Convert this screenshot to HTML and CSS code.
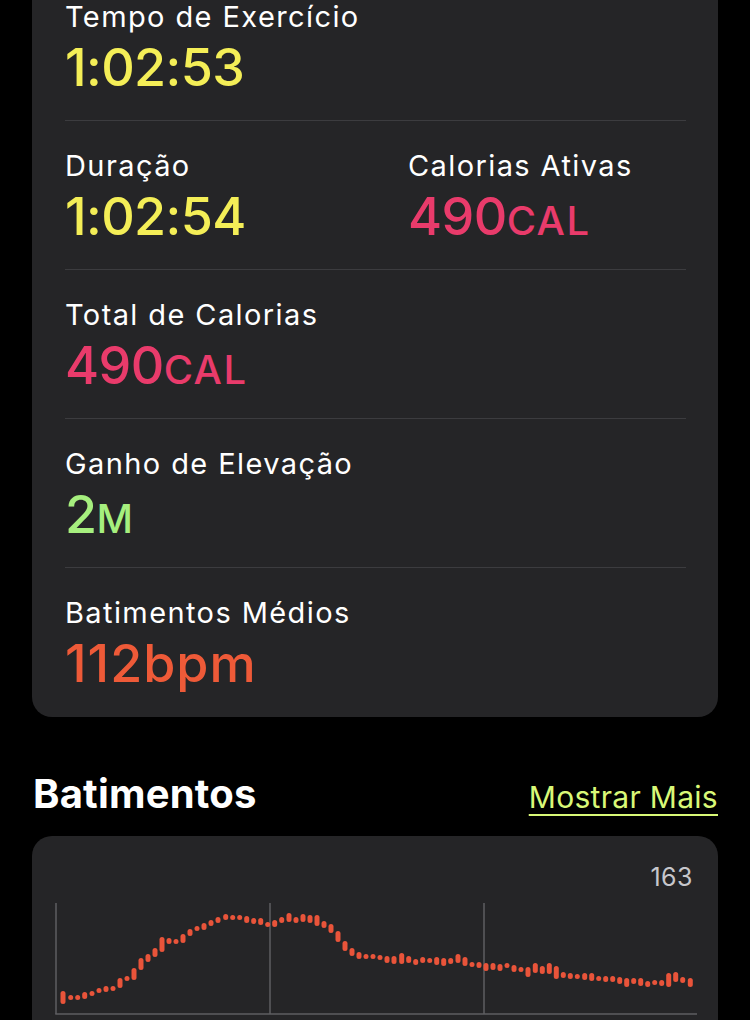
FILE: index.html
```html
<!DOCTYPE html>
<html lang="pt-BR">
<head>
<meta charset="utf-8">
<title>Treino</title>
<link rel="stylesheet" href="styles.css">
</head>
<body>
<main class="screen">
  <section class="stats-card">
    <div class="stat-row">
      <div class="stat">
        <div class="stat-label">Tempo de Exercício</div>
        <div class="stat-value yellow">1:02:53</div>
      </div>
    </div>
    <div class="stat-row two-col">
      <div class="stat">
        <div class="stat-label">Duração</div>
        <div class="stat-value yellow">1:02:54</div>
      </div>
      <div class="stat">
        <div class="stat-label">Calorias Ativas</div>
        <div class="stat-value pink">490<span class="unit">CAL</span></div>
      </div>
    </div>
    <div class="stat-row">
      <div class="stat">
        <div class="stat-label">Total de Calorias</div>
        <div class="stat-value pink">490<span class="unit">CAL</span></div>
      </div>
    </div>
    <div class="stat-row">
      <div class="stat">
        <div class="stat-label">Ganho de Elevação</div>
        <div class="stat-value green">2<span class="unit">M</span></div>
      </div>
    </div>
    <div class="stat-row">
      <div class="stat">
        <div class="stat-label">Batimentos Médios</div>
        <div class="stat-value orange">112bpm</div>
      </div>
    </div>
  </section>

  <header class="section-head">
    <h2 class="section-title">Batimentos</h2>
    <a class="section-link" href="#">Mostrar Mais</a>
  </header>

  <section class="chart-card">
    <div class="chart-max">163</div>
    <svg class="chart" width="686" height="130" viewBox="32 895 686 130" xmlns="http://www.w3.org/2000/svg">
      <g class="grid" stroke="#5e5e62" stroke-width="1.5" fill="none">
        <line x1="56" y1="903" x2="56" y2="1014"/>
        <line x1="270" y1="903" x2="270" y2="1014"/>
        <line x1="484" y1="903" x2="484" y2="1014"/>
        <line x1="55.25" y1="1014" x2="697" y2="1014"/>
      </g>
      <g class="bars" fill="#e9543a">
        <rect x="60.5" y="991" width="5" height="13" rx="2.5"/>
        <rect x="68.2" y="995" width="5" height="5" rx="2.5"/>
        <rect x="75.2" y="995" width="5" height="5" rx="2.5"/>
        <rect x="82.2" y="992" width="5" height="7" rx="2.5"/>
        <rect x="89.5" y="991" width="5" height="5" rx="2.5"/>
        <rect x="96.5" y="988" width="5" height="5" rx="2.5"/>
        <rect x="103.5" y="986" width="5" height="6" rx="2.5"/>
        <rect x="110.5" y="986" width="5" height="5" rx="2.5"/>
        <rect x="117.5" y="978" width="5" height="10" rx="2.5"/>
        <rect x="124.5" y="976" width="5" height="5" rx="2.5"/>
        <rect x="131.5" y="968" width="5" height="12" rx="2.5"/>
        <rect x="138.5" y="958" width="5" height="12" rx="2.5"/>
        <rect x="145.5" y="954" width="5" height="8" rx="2.5"/>
        <rect x="152.5" y="948" width="5" height="9" rx="2.5"/>
        <rect x="159.5" y="937" width="5" height="15" rx="2.5"/>
        <rect x="166.5" y="938" width="5" height="6" rx="2.5"/>
        <rect x="173.5" y="939" width="5" height="5" rx="2.5"/>
        <rect x="180.5" y="934" width="5" height="9" rx="2.5"/>
        <rect x="187.5" y="929" width="5" height="7" rx="2.5"/>
        <rect x="194.5" y="926" width="5" height="5" rx="2.5"/>
        <rect x="201.5" y="923" width="5" height="7" rx="2.5"/>
        <rect x="208.5" y="920" width="5" height="6" rx="2.5"/>
        <rect x="215.5" y="917" width="5" height="6" rx="2.5"/>
        <rect x="223.2" y="914" width="5" height="6" rx="2.5"/>
        <rect x="230.2" y="915" width="5" height="5" rx="2.5"/>
        <rect x="237.2" y="915" width="5" height="5" rx="2.5"/>
        <rect x="244.2" y="916" width="5" height="7" rx="2.5"/>
        <rect x="251.2" y="918" width="5" height="6" rx="2.5"/>
        <rect x="258.2" y="918" width="5" height="7" rx="2.5"/>
        <rect x="265.2" y="922" width="5" height="5" rx="2.5"/>
        <rect x="272.2" y="920" width="5" height="7" rx="2.5"/>
        <rect x="279.2" y="917" width="5" height="6" rx="2.5"/>
        <rect x="286.5" y="913" width="5" height="9" rx="2.5"/>
        <rect x="293.5" y="917" width="5" height="6" rx="2.5"/>
        <rect x="300.5" y="914" width="5" height="8" rx="2.5"/>
        <rect x="307.5" y="915" width="5" height="8" rx="2.5"/>
        <rect x="314.5" y="915" width="5" height="11" rx="2.5"/>
        <rect x="321.5" y="921" width="5" height="7" rx="2.5"/>
        <rect x="328.5" y="924" width="5" height="9" rx="2.5"/>
        <rect x="335.5" y="931" width="5" height="11" rx="2.5"/>
        <rect x="342.5" y="941" width="5" height="10" rx="2.5"/>
        <rect x="349.5" y="948" width="5" height="8" rx="2.5"/>
        <rect x="356.5" y="952" width="5" height="7" rx="2.5"/>
        <rect x="363.5" y="954" width="5" height="5" rx="2.5"/>
        <rect x="370.5" y="954" width="5" height="5" rx="2.5"/>
        <rect x="377.5" y="955" width="5" height="5" rx="2.5"/>
        <rect x="384.5" y="956" width="5" height="7" rx="2.5"/>
        <rect x="391.5" y="956" width="5" height="8" rx="2.5"/>
        <rect x="399.2" y="953" width="5" height="11" rx="2.5"/>
        <rect x="406.2" y="956" width="5" height="7" rx="2.5"/>
        <rect x="413.2" y="959" width="5" height="6" rx="2.5"/>
        <rect x="420.2" y="957" width="5" height="6" rx="2.5"/>
        <rect x="427.2" y="958" width="5" height="5" rx="2.5"/>
        <rect x="434.2" y="957" width="5" height="8" rx="2.5"/>
        <rect x="441.2" y="958" width="5" height="8" rx="2.5"/>
        <rect x="448.2" y="958" width="5" height="6" rx="2.5"/>
        <rect x="455.5" y="954" width="5" height="9" rx="2.5"/>
        <rect x="462.5" y="957" width="5" height="9" rx="2.5"/>
        <rect x="469.5" y="962" width="5" height="5" rx="2.5"/>
        <rect x="476.5" y="962" width="5" height="6" rx="2.5"/>
        <rect x="483.5" y="963" width="5" height="8" rx="2.5"/>
        <rect x="490.5" y="963" width="5" height="7" rx="2.5"/>
        <rect x="497.5" y="964" width="5" height="7" rx="2.5"/>
        <rect x="504.5" y="963" width="5" height="5" rx="2.5"/>
        <rect x="511.5" y="965" width="5" height="7" rx="2.5"/>
        <rect x="518.5" y="967" width="5" height="5" rx="2.5"/>
        <rect x="525.5" y="967" width="5" height="10" rx="2.5"/>
        <rect x="532.8" y="963" width="5" height="10" rx="2.5"/>
        <rect x="539.8" y="966" width="5" height="8" rx="2.5"/>
        <rect x="546.8" y="963" width="5" height="11" rx="2.5"/>
        <rect x="553.8" y="966" width="5" height="13" rx="2.5"/>
        <rect x="560.8" y="972" width="5" height="6" rx="2.5"/>
        <rect x="567.8" y="973" width="5" height="6" rx="2.5"/>
        <rect x="574.8" y="974" width="5" height="5" rx="2.5"/>
        <rect x="582.2" y="973" width="5" height="7" rx="2.5"/>
        <rect x="589.2" y="973" width="5" height="8" rx="2.5"/>
        <rect x="596.2" y="976" width="5" height="5" rx="2.5"/>
        <rect x="603.2" y="976" width="5" height="6" rx="2.5"/>
        <rect x="610.2" y="976" width="5" height="6" rx="2.5"/>
        <rect x="617.2" y="977" width="5" height="7" rx="2.5"/>
        <rect x="624.2" y="978" width="5" height="9" rx="2.5"/>
        <rect x="631.2" y="978" width="5" height="6" rx="2.5"/>
        <rect x="638.2" y="978" width="5" height="8" rx="2.5"/>
        <rect x="645.2" y="981" width="5" height="6" rx="2.5"/>
        <rect x="652.2" y="980" width="5" height="5" rx="2.5"/>
        <rect x="659.2" y="980" width="5" height="6" rx="2.5"/>
        <rect x="666.2" y="973" width="5" height="14" rx="2.5"/>
        <rect x="673.2" y="972" width="5" height="10" rx="2.5"/>
        <rect x="680.2" y="977" width="5" height="6" rx="2.5"/>
        <rect x="687.8" y="978" width="5" height="9" rx="2.5"/>
      </g>
    </svg>
  </section>
</main>
</body>
</html>
```

FILE: styles.css
```css
* {
  box-sizing: border-box;
}

html, body {
  margin: 0;
  padding: 0;
  background: #000;
}

body {
  width: 750px;
  height: 1020px;
  overflow: hidden;
  font-family: "Inter", "Roboto", "Liberation Sans", sans-serif;
  color: #fff;
}

.screen {
  padding: 0 32px;
}

/* Stats card */
.stats-card {
  margin-top: -28px;
  background: #252527;
  border-radius: 20px;
  padding: 0 32px 0 33px;
}

.stat-row {
  height: 149px;
  padding-top: 28px;
  border-bottom: 1px solid #3c3c3f;
}

.stat-row:last-child {
  border-bottom: none;
  height: 149px;
}

.two-col {
  display: grid;
  grid-template-columns: 343px 1fr;
}

.stat-label {
  font-size: 29px;
  line-height: 34px;
  font-weight: 400;
  color: #fff;
  letter-spacing: 1.4px;
}

.stat-value {
  margin-top: 4px;
  font-size: 52px;
  line-height: 60px;
  font-weight: 500;
  letter-spacing: -0.6px;
}

.unit {
  font-size: 40px;
  letter-spacing: 1.5px;
}

.yellow { color: #f4ee57; }
.pink { color: #e93b6b; }
.green { color: #a6ef7e; }
.orange { color: #ee5a38; letter-spacing: 1px; }

/* Section header */
.section-head {
  display: flex;
  justify-content: space-between;
  align-items: baseline;
  margin-top: 55px;
  height: 64px;
  padding-left: 1px;
}

.section-title {
  margin: 0;
  font-size: 40px;
  line-height: 44px;
  font-weight: 700;
  letter-spacing: 0.2px;
}

.section-link {
  font-size: 30px;
  line-height: 44px;
  color: #d9f877;
  letter-spacing: 0.3px;
  text-decoration: underline;
  text-decoration-thickness: 2px;
  text-underline-offset: 6px;
}

/* Chart card */
.chart-card {
  height: 220px;
  background: #252527;
  border-radius: 20px;
  overflow: hidden;
}

.chart-max {
  height: 59px;
  padding: 26px 25px 0 0;
  text-align: right;
  font-size: 25px;
  line-height: 30px;
  color: #c7c7cc;
  letter-spacing: 0.5px;
}

.chart {
  display: block;
}
```
